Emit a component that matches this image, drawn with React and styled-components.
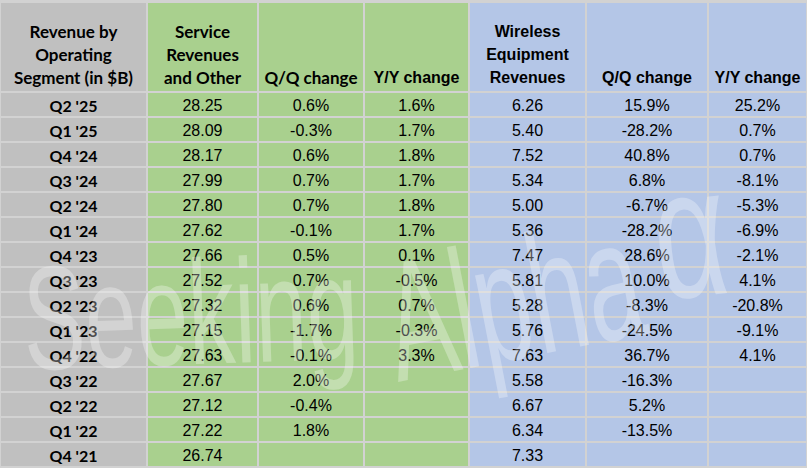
import React from "react";
import styled, { createGlobalStyle, css } from "styled-components";

const Global = createGlobalStyle`
  html, body { margin: 0; padding: 0; background: #ffffff; }
  #root { width: 807px; height: 468px; overflow: hidden; }
`;

const TONES = {
  gray: "#c0c0c0",
  green: "#a9d08e",
  blue: "#b4c6e7",
};

const Frame = styled.div`
  position: relative;
  width: 807px;
  height: 468px;
  overflow: hidden;
`;

const Sheet = styled.div`
  display: grid;
  grid-template-columns: 145px 109px 104px 103px 115px 120px 97px;
  grid-template-rows: 88px repeat(15, 23px);
  gap: 2px;
  padding: 3px 1px 2px 1px;
  background: #d2d2d2;
  box-sizing: border-box;
  width: 807px;
  height: 468px;
`;

const humanist = css`
  font-family: Lato, "Open Sans", sans-serif;
  font-weight: 700;
`;

const arial = css`
  font-family: "Liberation Sans", Arial, sans-serif;
`;

const Cell = styled.div`
  background: ${(p) => TONES[p.$tone]};
  color: #000;
  font-size: 16px;
  display: flex;
  justify-content: center;
  text-align: center;
  ${(p) => (p.$face === "humanist" ? humanist : arial)}
  ${(p) => p.$face === "arialBold" && css`font-weight: 700;`}
  ${(p) =>
    p.$head
      ? css`
          align-items: flex-end;
          line-height: 23px;
          padding-bottom: 2px;
        `
      : css`
          align-items: center;
          line-height: 23px;
          padding-top: 1px;
        `}
  ${(p) => p.$head && p.$face === "humanist" && css`font-size: 17px;`}
  box-sizing: border-box;
  white-space: nowrap;
`;

/* faint "Seeking Alpha α" watermark lying over the whole table */
const Watermark = styled.svg`
  position: absolute;
  inset: 0;
  width: 807px;
  height: 468px;
  pointer-events: none;
  font-family: "Liberation Sans", Arial, sans-serif;
  fill: rgba(255, 255, 255, 0.3);
`;

const TONE_BY_COL = ["gray", "green", "green", "green", "blue", "blue", "blue"];
const HEAD_FACE = ["humanist", "humanist", "humanist", "arialBold", "arialBold", "arialBold", "arialBold"];

const HEADERS = [
  ["Revenue by", "Operating", "Segment (in $B)"],
  ["Service", "Revenues", "and Other"],
  ["Q/Q change"],
  ["Y/Y change"],
  ["Wireless", "Equipment", "Revenues"],
  ["Q/Q change"],
  ["Y/Y change"],
];

const ROWS = [
  ["Q2 '25", "28.25", "0.6%", "1.6%", "6.26", "15.9%", "25.2%"],
  ["Q1 '25", "28.09", "-0.3%", "1.7%", "5.40", "-28.2%", "0.7%"],
  ["Q4 '24", "28.17", "0.6%", "1.8%", "7.52", "40.8%", "0.7%"],
  ["Q3 '24", "27.99", "0.7%", "1.7%", "5.34", "6.8%", "-8.1%"],
  ["Q2 '24", "27.80", "0.7%", "1.8%", "5.00", "-6.7%", "-5.3%"],
  ["Q1 '24", "27.62", "-0.1%", "1.7%", "5.36", "-28.2%", "-6.9%"],
  ["Q4 '23", "27.66", "0.5%", "0.1%", "7.47", "28.6%", "-2.1%"],
  ["Q3 '23", "27.52", "0.7%", "-0.5%", "5.81", "10.0%", "4.1%"],
  ["Q2 '23", "27.32", "0.6%", "0.7%", "5.28", "-8.3%", "-20.8%"],
  ["Q1 '23", "27.15", "-1.7%", "-0.3%", "5.76", "-24.5%", "-9.1%"],
  ["Q4 '22", "27.63", "-0.1%", "3.3%", "7.63", "36.7%", "4.1%"],
  ["Q3 '22", "27.67", "2.0%", "", "5.58", "-16.3%", ""],
  ["Q2 '22", "27.12", "-0.4%", "", "6.67", "5.2%", ""],
  ["Q1 '22", "27.22", "1.8%", "", "6.34", "-13.5%", ""],
  ["Q4 '21", "26.74", "", "", "7.33", "", ""],
];

export default function App() {
  return (
    <Frame>
      <Global />
      <Sheet>
        {HEADERS.map((lines, i) => (
          <Cell key={"h" + i} $head $tone={TONE_BY_COL[i]} $face={HEAD_FACE[i]}>
            <div>
              {lines.map((l, j) => (
                <div key={j}>{l}</div>
              ))}
            </div>
          </Cell>
        ))}
        {ROWS.map((row, r) =>
          row.map((v, c) => (
            <Cell
              key={r + "-" + c}
              $tone={TONE_BY_COL[c]}
              $face={c === 0 ? "humanist" : "arial"}
            >
              {v}
            </Cell>
          ))
        )}
      </Sheet>
      <Watermark viewBox="0 0 807 468" aria-hidden="true">
        <text
          x="25"
          y="370"
          fontSize="148"
          textLength="335"
          lengthAdjust="spacingAndGlyphs"
          transform="rotate(-2 25 370)"
        >
          Seeking
        </text>
        <text
          x="398"
          y="382"
          fontSize="170"
          textLength="257"
          lengthAdjust="spacingAndGlyphs"
          transform="rotate(-11 398 382)"
        >
          Alpha
        </text>
        <text
          x="660"
          y="300"
          fontSize="185"
          textLength="73"
          lengthAdjust="spacingAndGlyphs"
          transform="rotate(-6 660 300)"
        >
          α
        </text>
      </Watermark>
    </Frame>
  );
}
